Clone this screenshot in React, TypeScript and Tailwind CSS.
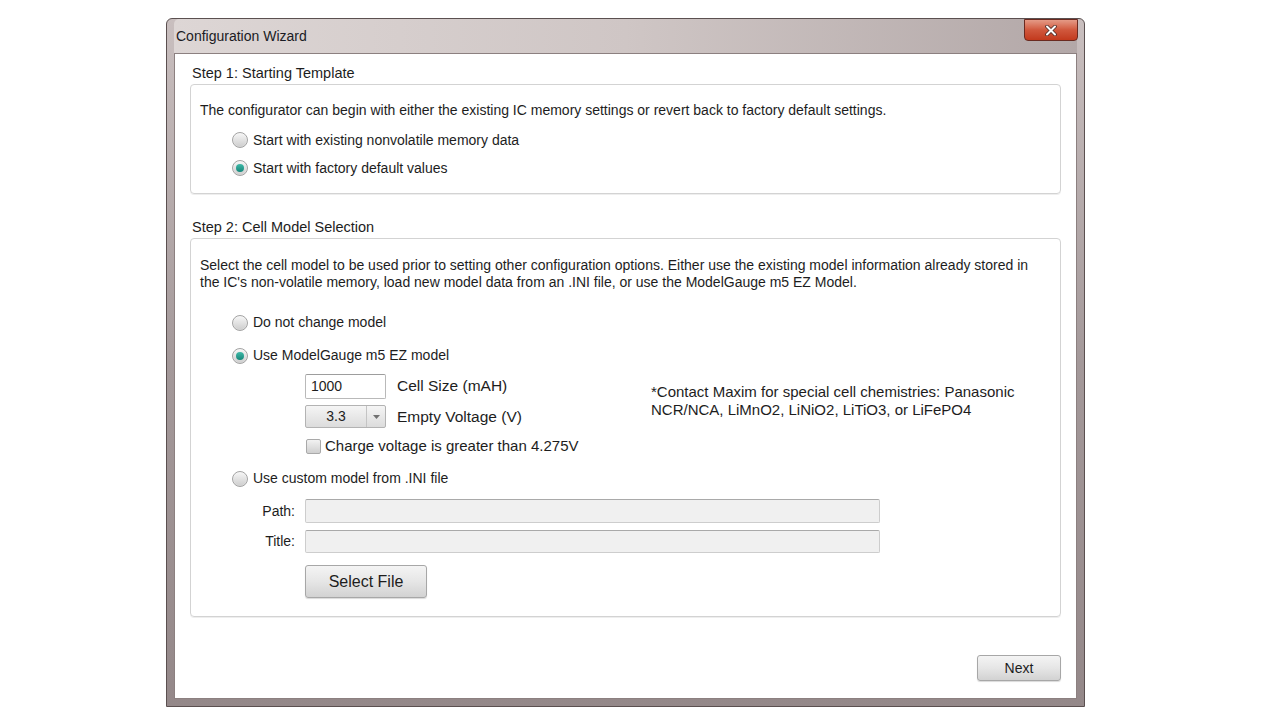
import React from 'react';

// Configuration wizard dialog (Win7-style window chrome)

const font = { fontFamily: '"Liberation Sans", Arial, sans-serif' };

const Radio: React.FC<{ checked?: boolean }> = ({ checked }) => (
    <span className="inline-flex h-[16px] w-[16px] shrink-0 items-center justify-center rounded-full border border-[#a3a3a3] bg-linear-to-b from-[#f7f7f7] to-[#cdcdcd] shadow-[inset_0_0_1px_#ffffff]">
        {checked && <span className="h-[8px] w-[8px] rounded-full bg-linear-to-b from-[#3fb9a8] to-[#13877a]" />}
    </span>
);

const RadioRow: React.FC<{ label: string; checked?: boolean; className?: string }> = ({ label, checked, className = '' }) => (
    <div className={`flex items-center gap-[5px] pl-[41px] ${className}`}>
        <Radio checked={checked} />
        <span className="text-[14px] text-[#1d1d1d]">{label}</span>
    </div>
);

const GreyButton: React.FC<{ label: string; className?: string }> = ({ label, className = '' }) => (
    <button className={`rounded-[3px] border border-[#a7a7a7] bg-linear-to-b from-[#f4f4f4] via-[#e6e6e6] to-[#d2d2d2] text-[#1d1d1d] shadow-[0_1px_1px_rgba(0,0,0,0.15)] ${className}`}>
        {label}
    </button>
);

const App: React.FC = () => {
    return (
        <div className="min-h-[721px] w-full bg-white pt-[18px]" style={font}>
            <div className="ml-[166px] flex h-[689px] w-[919px] flex-col rounded-t-[6px] border border-[#5b5050] bg-linear-to-b from-[#c9bfbf] via-[#a4999a] to-[#948889] px-[7px] pb-[7px]">
                {/* Title bar */}
                <div className="relative flex h-[34px] shrink-0 items-center rounded-t-[5px] bg-linear-to-r from-[#ddd6d5] via-[#cfc6c5] to-[#b3a8a8] pl-[2px]">
                    <span className="text-[14px] text-[#1b1b24]">Configuration Wizard</span>
                    <div className="absolute right-[-1px] top-[0px] flex h-[22px] w-[54px] items-center justify-center rounded-b-[4px] border border-[#6a2a20] bg-linear-to-b from-[#e49a86] via-[#d0573c] to-[#c2391c]">
                        <svg width="12" height="11" viewBox="0 0 12 11">
                            <path d="M2 1.5 L10 9.5 M10 1.5 L2 9.5" stroke="#4a2a26" strokeWidth="3.6" strokeLinecap="round" />
                            <path d="M2 1.5 L10 9.5 M10 1.5 L2 9.5" stroke="#ffffff" strokeWidth="2" strokeLinecap="round" />
                        </svg>
                    </div>
                </div>

                {/* Client area */}
                <div className="flex flex-1 flex-col border border-[#8c8080] bg-white px-[15px] pt-[11px]">
                    {/* Step 1 */}
                    <div className="pl-[2px] text-[14.5px] leading-[16px] text-[#1d1d1d]">Step 1: Starting Template</div>
                    <div className="mt-[3px] rounded-[4px] border border-[#d3d3d3] pb-[11px] pt-[17px] shadow-[0_1px_0_#eeeeee]">
                        <p className="pl-[9px] text-[14px] leading-[17px] text-[#1d1d1d]">
                            The configurator can begin with either the existing IC memory settings or revert back to factory default settings.
                        </p>
                        <RadioRow className="mt-[7px] h-[28px]" label="Start with existing nonvolatile memory data" />
                        <RadioRow className="h-[28px]" label="Start with factory default values" checked />
                    </div>

                    {/* Step 2 */}
                    <div className="mt-[25px] pl-[2px] text-[14.5px] leading-[16px] text-[#1d1d1d]">Step 2: Cell Model Selection</div>
                    <div className="mt-[3px] rounded-[4px] border border-[#d3d3d3] pb-[18px] pt-[18px] shadow-[0_1px_0_#eeeeee]">
                        <p className="pl-[9px] text-[14px] leading-[17px] text-[#1d1d1d]">
                            Select the cell model to be used prior to setting other configuration options. Either use the existing model information already stored in
                            <br />
                            the IC's non-volatile memory, load new model data from an .INI file, or use the ModelGauge m5 EZ Model.
                        </p>
                        <RadioRow className="mt-[15px] h-[33px]" label="Do not change model" />
                        <RadioRow className="h-[33px]" label="Use ModelGauge m5 EZ model" checked />

                        {/* EZ model options */}
                        <div className="flex pl-[114px]">
                            <div className="flex w-[346px] flex-col">
                                <div className="mt-[1px] flex h-[26px] items-center">
                                    <div className="flex h-[25px] w-[81px] items-center rounded-[2px] border border-[#b9b9b9] border-t-[#9d9d9d] bg-white pl-[5px] text-[14px] text-[#1d1d1d]">
                                        1000
                                    </div>
                                    <span className="ml-[11px] text-[15.5px] text-[#1d1d1d]">Cell Size (mAH)</span>
                                </div>
                                <div className="mt-[6px] flex h-[23px] items-center">
                                    <div className="flex h-[23px] w-[81px] items-stretch rounded-[2px] border border-[#b3b3b3] bg-linear-to-b from-[#f5f5f5] to-[#dcdcdc]">
                                        <span className="flex flex-1 items-center justify-center text-[14px] text-[#1d1d1d]">3.3</span>
                                        <span className="flex w-[19px] items-center justify-center border-l border-[#c4c4c4]">
                                            <svg width="7" height="4" viewBox="0 0 7 4">
                                                <path d="M0 0 L7 0 L3.5 4 Z" fill="#707070" />
                                            </svg>
                                        </span>
                                    </div>
                                    <span className="ml-[11px] text-[15.5px] text-[#1d1d1d]">Empty Voltage (V)</span>
                                </div>
                                <div className="mt-[6px] flex h-[24px] items-center">
                                    <span className="ml-[1px] h-[15px] w-[15px] rounded-[2px] border border-[#a9a9a9] bg-linear-to-b from-[#f2f2f2] to-[#cfcfcf]" />
                                    <span className="ml-[4px] text-[15px] text-[#1d1d1d]">Charge voltage is greater than 4.275V</span>
                                </div>
                            </div>
                            <p className="mt-[11px] text-[15px] leading-[18px] text-[#1d1d1d]">
                                *Contact Maxim for special cell chemistries: Panasonic
                                <br />
                                NCR/NCA, LiMnO2, LiNiO2, LiTiO3, or LiFePO4
                            </p>
                        </div>

                        <RadioRow className="mt-[4px] h-[33px]" label="Use custom model from .INI file" />

                        {/* File path fields */}
                        <div className="mt-[4px] flex h-[24px] items-center">
                            <span className="w-[104px] text-right text-[14px] text-[#1d1d1d]">Path:</span>
                            <div className="ml-[10px] h-[24px] w-[575px] rounded-[2px] border border-[#cdcdcd] border-t-[#a9a9a9] bg-[#f0f0f0]" />
                        </div>
                        <div className="mt-[7px] flex h-[23px] items-center">
                            <span className="w-[104px] text-right text-[14px] text-[#1d1d1d]">Title:</span>
                            <div className="ml-[10px] h-[23px] w-[575px] rounded-[2px] border border-[#cdcdcd] border-t-[#a9a9a9] bg-[#f0f0f0]" />
                        </div>
                        <GreyButton label="Select File" className="ml-[114px] mt-[12px] h-[33px] w-[122px] text-[16px]" />
                    </div>

                    <div className="mt-[38px] flex justify-end">
                        <GreyButton label="Next" className="h-[26px] w-[84px] text-[14px]" />
                    </div>
                </div>
            </div>
        </div>
    );
};

export default App;
